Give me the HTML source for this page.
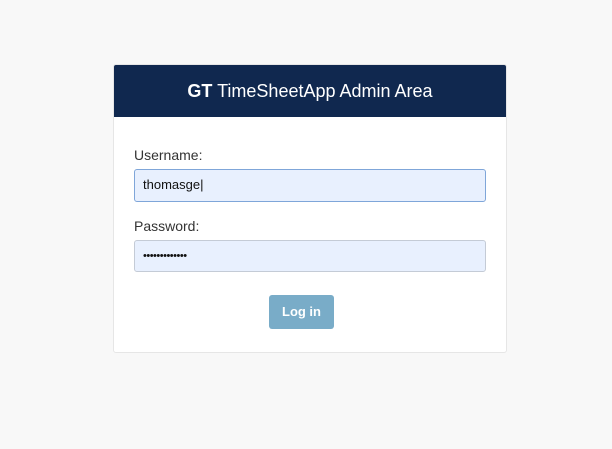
<!DOCTYPE html><html><head><style>
body{margin:0;background:#f8f8f8;font-family:"Liberation Sans",sans-serif;width:612px;height:449px;position:relative;overflow:hidden}
.card{position:absolute;left:113px;top:64px;width:392px;height:287px;background:#fff;border:1px solid #e6e6e6;border-radius:3px;overflow:hidden}
.hd{height:52px;background:#10284f;color:#fff;font-size:18px;text-align:center;line-height:52px}
.lbl{position:absolute;left:20px;font-size:14px;color:#333}
.in{position:absolute;left:20px;width:350px;height:30px;background:#e8f0fe;border:1px solid #c4cbd6;border-radius:3px;font-size:13px;line-height:30px;padding-left:8px;box-sizing:border-box;color:#111}
.btn{position:absolute;left:155px;top:230px;width:65px;height:34px;background:#79acc8;border-radius:3px;color:#fff;font-size:13px;font-weight:bold;text-align:center;line-height:34px}
</style></head><body><div class="card">
<div class="hd"><b>GT</b> TimeSheetApp Admin Area</div>
<div class="lbl" style="top:82px">Username:</div>
<div class="in" style="top:104px;width:352px;height:33px;border:1px solid #7fa6d9">thomasge|</div>
<div class="lbl" style="top:153px">Password:</div>
<div class="in" style="top:175px;width:352px;height:32px;font-size:11px;letter-spacing:-0.5px">•••••••••••••</div>
<div class="btn">Log in</div>
</div></body></html>
